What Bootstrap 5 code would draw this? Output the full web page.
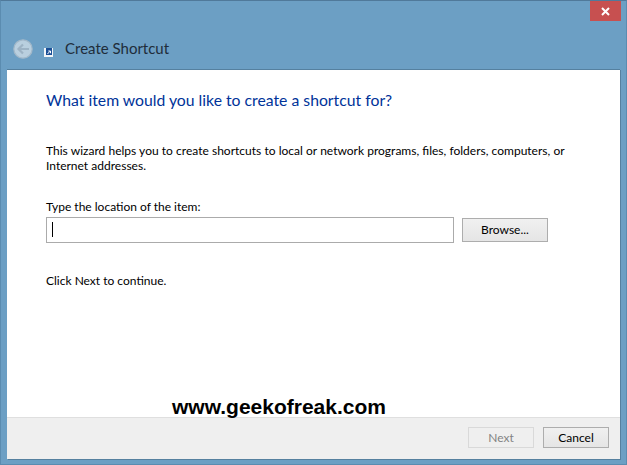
<!DOCTYPE html>
<html lang="en">
<head>
<meta charset="utf-8">
<title>Create Shortcut</title>
<link href="https://cdn.jsdelivr.net/npm/bootstrap@5.3.0/dist/css/bootstrap.min.css" rel="stylesheet">
<style>
html,body{margin:0;height:465px;width:627px;overflow:hidden}
body{font-family:Lato,"Noto Sans",sans-serif;font-size:12px;color:#000;background:#fff}
.win-frame{width:627px;height:465px;background:#6c9fc4;border-top:1px solid #50799a;border-left:1px solid #5b8cb0;border-right:1px solid #5b8cb0;border-bottom:1px solid #5b8cb0;position:relative}
.win-close{position:absolute;top:0;right:5px;width:31px;height:20px;background:#c75050;display:flex;align-items:center;justify-content:center}
.win-head{height:68px;padding:0 0 10px 12px}
.win-back{width:20px;height:20px}
.win-app{width:9px;height:9px;margin:0 12px 2px 11px}
.win-title{font-size:15px;color:#1f2d3a;line-height:20px;padding-bottom:1px}
.win-panel{margin:0 6px 0 6px;height:390px;background:#fff;border-top:1px solid #55809f;box-shadow:1px 1px 0 #55809f}
.win-body{height:347px;padding:0 0 0 39px;background:#fff;position:relative}
.win-heading{font-size:15.75px;font-weight:400;color:#003399;line-height:20px;padding-top:20px;margin:0}
.win-intro{line-height:15px;padding-top:33px;width:535px;margin:0;word-spacing:.12px}
.win-label{line-height:15px;padding-top:26px;margin:0 0 3px;display:block}
.win-input{width:408px;height:26px;border:1px solid #ababab;padding:4px 5px;position:relative}
.win-caret{display:block;width:1px;height:15px;background:#000}
.win-btn{font-family:inherit;font-size:12px;line-height:1;padding:0;border:1px solid #adadad;border-radius:0;background:linear-gradient(#f0f0f0,#e5e5e5);color:#000;width:86px;height:24px}
.win-btn.narrow{width:66px;height:21px}
.win-btn:disabled{background:#efefef;border-color:#d9d9d9;color:#838383;opacity:1}
.win-continue{line-height:15px;padding-top:30px;margin:0}
.win-foot{height:42px;background:#efefef;border-top:1px solid #dfdfdf;padding:9px 11px 0 0;column-gap:9px}
.win-mark{position:absolute;left:165px;top:326px;font-family:"Liberation Sans",Arial,sans-serif;font-weight:700;font-size:21px;line-height:22px;color:#000;white-space:nowrap}
</style>
</head>
<body>
<div class="win-frame">
  <div class="win-close">
    <svg width="9" height="9" viewBox="0 0 9 9"><path d="M1 1L8 8M8 1L1 8" stroke="#fff" stroke-width="2"/></svg>
  </div>
  <div class="win-head d-flex align-items-end">
    <svg class="win-back" viewBox="0 0 20 20">
      <circle cx="10" cy="10" r="9.2" fill="#b9cfdf" stroke="#a2b8c9" stroke-width="1.2"/>
      <path d="M16 10H6M10 5.5L5.5 10L10 14.5" fill="none" stroke="#9db3c5" stroke-width="2.2"/>
    </svg>
    <svg class="win-app" viewBox="0 0 9 9">
      <rect x="0" y="0" width="9" height="9" fill="#f2f5f8"/>
      <rect x="2" y="0" width="6" height="7" fill="#1b4f96"/>
      <path d="M3.5 6L6 3.2M4.3 3H6.5V5.2" stroke="#fff" fill="none"/>
    </svg>
    <span class="win-title">Create Shortcut</span>
  </div>
  <div class="win-panel d-flex flex-column">
    <div class="win-body">
      <h1 class="win-heading">What item would you like to create a shortcut for?</h1>
      <p class="win-intro">This wizard helps you to create shortcuts to local or network programs, files, folders, computers, or Internet addresses.</p>
      <label class="win-label">Type the location of the item:</label>
      <div class="d-flex align-items-center gap-2">
        <div class="win-input"><span class="win-caret"></span></div>
        <button type="button" class="btn win-btn">Browse...</button>
      </div>
      <p class="win-continue">Click Next to continue.</p>
      <div class="win-mark">www.geekofreak.com</div>
    </div>
    <div class="win-foot d-flex justify-content-end">
      <button type="button" class="btn win-btn narrow" disabled>Next</button>
      <button type="button" class="btn win-btn narrow">Cancel</button>
    </div>
  </div>
</div>
<script src="https://cdn.jsdelivr.net/npm/bootstrap@5.3.0/dist/js/bootstrap.bundle.min.js"></script>
</body>
</html>
